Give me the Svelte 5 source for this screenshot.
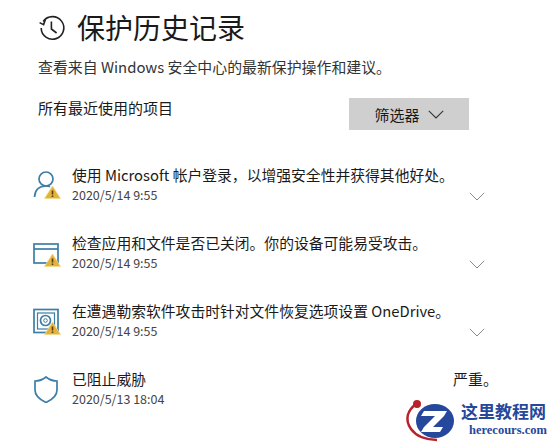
<script>
  const items = [
    { title: '使用 Microsoft 帐户登录，以增强安全性并获得其他好处。', date: '2020/5/14 9:55', icon: 'user' },
    { title: '检查应用和文件是否已关闭。你的设备可能易受攻击。', date: '2020/5/14 9:55', icon: 'window' },
    { title: '在遭遇勒索软件攻击时针对文件恢复选项设置 OneDrive。', date: '2020/5/14 9:55', icon: 'safe' },
    { title: '已阻止威胁', date: '2020/5/13 18:04', icon: 'shield', severity: '严重。' }
  ];
</script>

<main class="page">
  <header class="head">
    <svg class="clock" viewBox="0 0 28 28" width="28" height="28" fill="none" stroke="#222" stroke-width="1.6">
      <path d="M5.2 7.5A11.3 11.3 0 1 1 3.2 14" />
      <path d="M1.6 8.6 L5.6 10.6 L7.4 5.6" />
      <path d="M13.4 7.5V15L18.6 19" />
    </svg>
    <h1>保护历史记录</h1>
  </header>
  <p class="sub">查看来自 Windows 安全中心的最新保护操作和建议。</p>

  <div class="filter-row">
    <span class="all">所有最近使用的项目</span>
    <button class="filter">
      <span>筛选器</span>
      <svg viewBox="0 0 16 9" width="16" height="9" fill="none" stroke="#333" stroke-width="1.1"><path d="M.8.8 8 8 15.2.8" /></svg>
    </button>
  </div>

  <ul class="list">
    {#each items as item}
      <li class="item">
        <div class="icon">
          <svg viewBox="0 0 28 30" width="28" height="30" fill="none" stroke="#3d7ea6" stroke-width="1.7">
            {#if item.icon === 'user'}
              <circle cx="13" cy="10" r="7" />
              <path d="M1.500 28c.5-7 4.500-11 11.500-11 1.500 0 3 .3 4 .8" />
            {:else if item.icon === 'window'}
              <rect x="1" y="7" width="24" height="19" />
              <path d="M1 12h24" />
            {:else if item.icon === 'safe'}
              <rect x="1" y="4.500" width="24" height="23" />
              <rect x="4.500" y="8" width="17" height="16" stroke-width="1.200" />
              <circle cx="12.500" cy="15.500" r="5" />
              <circle cx="12.500" cy="15.500" r="1.800" stroke-width="1" />
            {:else}
              <path d="M13 4c3 2.500 7 4 11 4v9c0 5.500-4.500 9.500-11 12.500C6.500 26.500 2 22.500 2 17V8c4 0 8-1.500 11-4z" />
            {/if}
            {#if item.icon !== 'shield'}
              <path d="M19.500 17 27.500 29.500H11.500Z" fill="#e3b23c" stroke="#f3d98a" stroke-width=".8" />
              <path d="M19.500 21.500v4M19.500 26.500v1.600" stroke="#5a3d0a" stroke-width="1.600" />
            {/if}
          </svg>
        </div>
        <div class="body">
          <div class="title">{item.title}</div>
          <div class="date">{item.date}</div>
        </div>
        {#if item.severity}
          <span class="severity">{item.severity}</span>
        {:else}
          <svg class="chev" viewBox="0 0 16 9" width="16" height="9" fill="none" stroke="#8a8a8a" stroke-width="1"><path d="M.8.8 8 8 15.200.8" /></svg>
        {/if}
      </li>
    {/each}
  </ul>

  <div class="mark">
    <svg viewBox="0 0 52 46" width="52" height="46">
      <path d="M12 6C4 12 0 21 7 31c5 7 15 11 26 11" fill="none" stroke="#b8222a" stroke-width="2.500" />
      <circle cx="13" cy="6" r="4" fill="#b8222a" />
      <ellipse cx="31" cy="23" rx="19" ry="17" fill="#25479c" />
      <path d="M20 13h23l-3 5-11 11h10l-3 5H17l3-5 11-11H17z" fill="#fff" />
    </svg>
    <div class="mark-text">
      <div class="cn">这里教程网</div>
      <div class="en">herecours.com</div>
    </div>
  </div>
</main>

<style>
  :global(body) { margin: 0; background: #fff; }
  .page {
    position: relative;
    width: 552px;
    height: 444px;
    overflow: hidden;
    box-sizing: border-box;
    padding: 11px 0 0 38px;
    color: #1a1a1a;
    font-family: "Noto Sans CJK SC", "Noto Sans", sans-serif;
  }
  .head { display: flex; align-items: center; gap: 11px; height: 32px; }
  .clock { flex: none; margin-top: 1px; }
  h1 { margin: 0; font-size: 28px; font-weight: 400; line-height: 32px; }
  .sub { margin: 14px 0 0; font-size: 14.900px; line-height: 20px; color: #333; white-space: nowrap; }
  .filter-row { display: flex; align-items: flex-start; margin-top: 21px; height: 32px; padding-right: 83px; justify-content: space-between; }
  .all { font-size: 15px; line-height: 22px; margin-top: -1px; }
  .filter {
    width: 120px; height: 32px; border: 0; padding: 0; background: #cfcfcf; color: #1a1a1a;
    display: flex; align-items: center; justify-content: center; gap: 8px;
    font: inherit; font-size: 15px;
  }
  .list { list-style: none; margin: 34px 0 0 -8px; padding: 0; display: flex; flex-direction: column; gap: 26px; }
  .item { display: flex; align-items: flex-start; height: 42px; position: relative; padding-right: 68px; }
  .icon { width: 39px; flex: none; padding: 5px 0 0 3px; }
  .body { flex: 1; min-width: 0; }
  .title { font-size: 14.800px; line-height: 21px; white-space: nowrap; }
  .date { font-size: 12.500px; line-height: 18px; margin-top: 1px; color: #444; }
  .chev { position: absolute; left: 439px; top: 28px; }
  .severity { position: absolute; left: 423px; top: 0; font-size: 15px; line-height: 21px; }
  .mark { position: absolute; left: 404px; bottom: 0; height: 46px; display: flex; align-items: flex-start; }
  .mark svg { flex: none; }
  .mark-text { padding-top: 2px; margin-left: 5px; }
  .cn { font-family: "Noto Sans CJK SC", sans-serif; font-weight: 700; font-size: 17px; line-height: 22px; color: #25479c; white-space: nowrap; }
  .en { font-family: "Liberation Serif", serif; font-weight: 700; font-size: 12.500px; line-height: 16px; color: #25479c; white-space: nowrap; padding-left: 8px; }
</style>
